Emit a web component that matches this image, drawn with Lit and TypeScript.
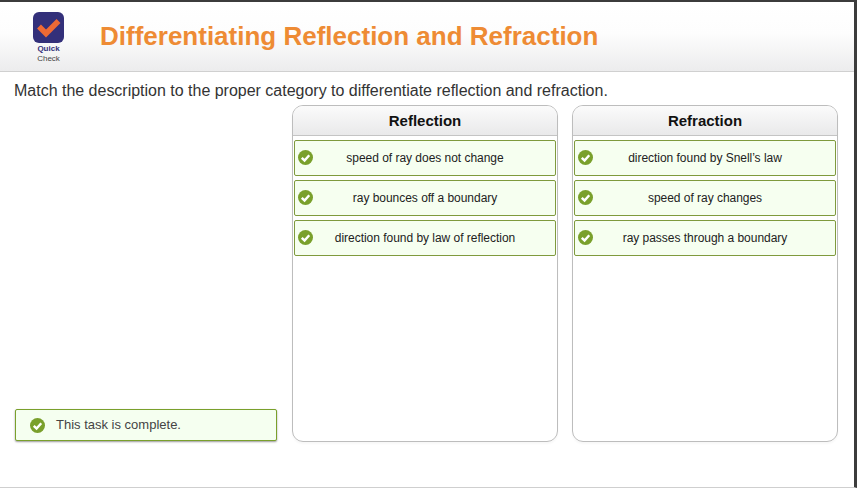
import { LitElement, html, css, svg } from 'lit';
import { customElement } from 'lit/decorators.js';

const check = (size: number) => html`<svg class="check" width=${size} height=${size} viewBox="0 0 16 16">
  ${svg`<circle cx="8" cy="8" r="8" fill="#7aa02c"></circle>
  <path d="M4 8.4 L7 11.2 L12 5.6" fill="none" stroke="#fff" stroke-width="2.6"></path>`}
</svg>`;

const columns = [
  { title: 'Reflection', items: ['speed of ray does not change', 'ray bounces off a boundary', 'direction found by law of reflection'] },
  { title: 'Refraction', items: ['direction found by Snell\u2019s law', 'speed of ray changes', 'ray passes through a boundary'] },
];

@customElement('app-root')
export class AppRoot extends LitElement {
  static styles = css`
    :host {
      display: block;
      height: 488px;
      box-sizing: border-box;
      border-top: 2px solid #3c3c3c;
      border-right: 3px solid #3c3c3c;
      border-bottom: 1px solid #cfcfcf;
      background: #fff;
      font-family: "Liberation Sans", Arial, sans-serif;
      color: #333;
      overflow: hidden;
    }
    .header {
      display: flex;
      align-items: center;
      height: 70px;
      box-sizing: border-box;
      border-bottom: 1px solid #d0d0d0;
      background: linear-gradient(180deg, #fff 0%, #fdfdfd 45%, #ececed 100%);
      padding-left: 33px;
    }
    .logo {
      display: flex;
      flex-direction: column;
      align-items: center;
      align-self: flex-start;
      width: 31px;
      margin: 10px 36px 0 0;
    }
    .logo svg {
      display: block;
      margin-bottom: 1px;
    }
    .logo span {
      font-size: 8px;
      line-height: 10px;
      font-weight: bold;
      color: #33307a;
    }
    .logo span.second {
      font-weight: normal;
      color: #444;
    }
    h1 {
      margin: 0 0 1px;
      font-size: 26px;
      font-weight: bold;
      color: #ee8b34;
    }
    .prompt {
      margin: 0;
      padding: 10px 0 0 14px;
      font-size: 16px;
      line-height: 18px;
      height: 23px;
      letter-spacing: -0.01px;
    }
    .main {
      display: flex;
      padding-left: 15px;
      height: 337px;
    }
    .left {
      width: 262px;
      margin-right: 15px;
      display: flex;
      flex-direction: column;
      justify-content: flex-end;
      padding-bottom: 1px;
    }
    .status {
      display: flex;
      align-items: center;
      height: 32px;
      box-sizing: border-box;
      padding-left: 14px;
      border: 1px solid #7aa02c;
      border-radius: 2px;
      background: #f5fff0;
      box-shadow: 0 1px 2px rgba(0, 0, 0, 0.4);
      font-size: 13px;
      color: #444;
    }
    .status span { padding-bottom: 2px; }
    .status .check { margin-right: 11px; }
    .column {
      width: 266px;
      box-sizing: border-box;
      margin-right: 14px;
      border: 1px solid #bdbdbd;
      border-radius: 11px;
      box-shadow: 0 2px 2px rgba(0, 0, 0, 0.03);
      overflow: hidden;
    }
    .column-head {
      height: 30px;
      box-sizing: border-box;
      border-bottom: 1px solid #c4c4c4;
      background: linear-gradient(180deg, #fbfbfb 0%, #e9e9ea 100%);
      text-align: center;
      font-size: 15px;
      line-height: 29px;
      font-weight: bold;
      color: #111;
    }
    .items {
      display: flex;
      flex-direction: column;
      gap: 4px;
      padding: 4px 1px;
    }
    .item {
      position: relative;
      height: 36px;
      box-sizing: border-box;
      border: 1px solid #7f9a3d;
      border-radius: 2px;
      background: #f6fff0;
      display: flex;
      align-items: center;
      justify-content: center;
      font-size: 12px;
      letter-spacing: -0.03px;
      color: #222;
    }
    .item .check {
      position: absolute;
      left: 3px;
      top: 9px;
    }
  `;

  render() {
    return html`
      <div class="header">
        <div class="logo">
          <svg width="31" height="31" viewBox="0 0 31 31">
            <rect width="31" height="31" rx="6" fill="#33307a"></rect>
            <path d="M6 14.5 L13 21.5 L25.5 9" fill="none" stroke="#ee6a35" stroke-width="5.5"></path>
          </svg>
          <span>Quick</span>
          <span class="second">Check</span>
        </div>
        <h1>Differentiating Reflection and Refraction</h1>
      </div>
      <p class="prompt">Match the description to the proper category to differentiate reflection and refraction.</p>
      <div class="main">
        <div class="left">
          <div class="status">${check(15)}<span>This task is complete.</span></div>
        </div>
        ${columns.map(
          (c) => html`<div class="column">
            <div class="column-head">${c.title}</div>
            <div class="items">
              ${c.items.map((t) => html`<div class="item">${check(15)}<span>${t}</span></div>`)}
            </div>
          </div>`
        )}
      </div>
    `;
  }
}
